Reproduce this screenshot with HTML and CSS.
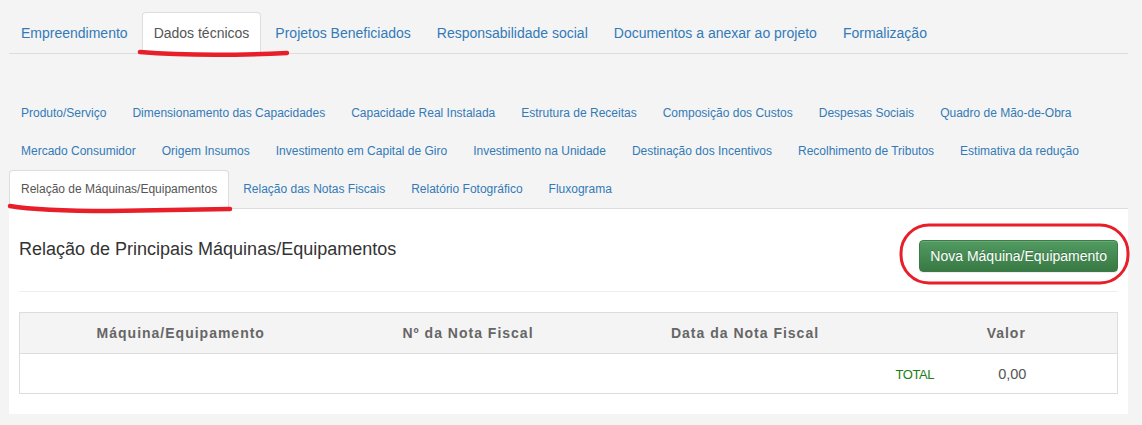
FILE: index.html
```html
<!DOCTYPE html>
<html lang="pt-BR">
<head>
<meta charset="utf-8">
<title>Dados técnicos</title>
<link rel="stylesheet" href="styles.css">
</head>
<body>
<div class="page">
  <ul class="tabs tabs-main">
    <li><a href="#">Empreendimento</a></li>
    <li class="active"><a href="#">Dados técnicos</a></li>
    <li><a href="#">Projetos Beneficiados</a></li>
    <li><a href="#">Responsabilidade social</a></li>
    <li><a href="#">Documentos a anexar ao projeto</a></li>
    <li><a href="#">Formalização</a></li>
  </ul>

  <ul class="tabs tabs-sub">
    <li><a href="#">Produto/Serviço</a></li>
    <li><a href="#">Dimensionamento das Capacidades</a></li>
    <li><a href="#">Capacidade Real Instalada</a></li>
    <li><a href="#">Estrutura de Receitas</a></li>
    <li><a href="#">Composição dos Custos</a></li>
    <li><a href="#">Despesas Sociais</a></li>
    <li><a href="#">Quadro de Mão-de-Obra</a></li>
    <li><a href="#">Mercado Consumidor</a></li>
    <li><a href="#">Origem Insumos</a></li>
    <li><a href="#">Investimento em Capital de Giro</a></li>
    <li><a href="#">Investimento na Unidade</a></li>
    <li><a href="#">Destinação dos Incentivos</a></li>
    <li><a href="#">Recolhimento de Tributos</a></li>
    <li><a href="#">Estimativa da redução</a></li>
    <li class="active"><a href="#">Relação de Máquinas/Equipamentos</a></li>
    <li><a href="#">Relação das Notas Fiscais</a></li>
    <li><a href="#">Relatório Fotográfico</a></li>
    <li><a href="#">Fluxograma</a></li>
  </ul>

  <div class="panel">
    <div class="panel-head">
      <h3 class="panel-title">Relação de Principais Máquinas/Equipamentos</h3>
      <button class="btn-success" type="button">Nova Máquina/Equipamento</button>
    </div>
    <hr class="divider">
    <table class="grid">
      <colgroup>
        <col class="c1"><col class="c2"><col class="c3"><col class="c4">
      </colgroup>
      <thead>
        <tr>
          <th>Máquina/Equipamento</th>
          <th>Nº da Nota Fiscal</th>
          <th>Data da Nota Fiscal</th>
          <th>Valor</th>
        </tr>
      </thead>
      <tbody>
        <tr>
          <td></td>
          <td></td>
          <td></td>
          <td class="total-cell"><span class="total-label">TOTAL</span><span class="total-value">0,00</span></td>
        </tr>
      </tbody>
    </table>
  </div>
</div>

<svg class="marks" width="1142" height="425" viewBox="0 0 1142 425" aria-hidden="true">
  <path d="M140 52 Q 200 57 287 53" />
  <path d="M10 206 Q 40 211 110 211 Q 180 210 230 209" />
  <rect x="901" y="225" width="227" height="58" rx="28" ry="28" class="ring" />
</svg>
</body>
</html>
```
FILE: styles.css
```css
* { box-sizing: border-box; }

html, body {
  margin: 0;
  padding: 0;
  background: #f4f4f4;
  font-family: "Liberation Sans", Arial, sans-serif;
  color: #333;
}

.page {
  padding: 12px 14px 0 9px;
}

.tabs {
  list-style: none;
  margin: 0;
  padding: 0;
  display: flex;
  flex-wrap: wrap;
  border-bottom: 1px solid #ddd;
}

.tabs li {
  margin-bottom: -1px;
}

.tabs a {
  display: block;
  margin-right: 2px;
  border: 1px solid transparent;
  border-radius: 4px 4px 0 0;
  color: #337ab7;
  text-decoration: none;
}

.tabs li.active a {
  background: #fff;
  border-color: #ddd;
  border-bottom-color: transparent;
  color: #555;
}

.tabs-main a {
  font-size: 14px;
  line-height: 20px;
  padding: 10px 11px;
}

.tabs-sub {
  margin-top: 40px;
}

.tabs-sub a {
  font-size: 12px;
  line-height: 17px;
  padding: 10px 11px;
}

.panel {
  background: #fff;
  padding: 30px 10px 20px;
}

.panel-head {
  display: flex;
  justify-content: space-between;
  align-items: flex-start;
}

.panel-title {
  margin: 0;
  font-size: 18px;
  line-height: 20px;
  font-weight: normal;
  color: #333;
}

.btn-success {
  margin-top: 1px;
  font-family: "Liberation Sans", Arial, sans-serif;
  font-size: 14px;
  line-height: 20px;
  padding: 5px 10px;
  color: #fff;
  border: 1px solid #3b7b46;
  border-radius: 4px;
  background: linear-gradient(to bottom, #519b61 0%, #397944 100%);
  text-shadow: 0 -1px 0 rgba(0, 0, 0, 0.2);
  box-shadow: inset 0 1px 0 rgba(255, 255, 255, 0.15), 0 1px 1px rgba(0, 0, 0, 0.075);
}

.divider {
  margin: 19px 0 20px;
  border: 0;
  border-top: 1px solid #eee;
}

.grid {
  width: 100%;
  border-collapse: collapse;
  table-layout: fixed;
  border: 1px solid #ddd;
}

.c1 { width: 322px; }
.c2 { width: 253px; }
.c3 { width: 301px; }

.grid th {
  background: #f4f4f4;
  color: #666;
  font-size: 14px;
  font-weight: bold;
  letter-spacing: 1px;
  height: 41px;
  text-align: center;
  border-bottom: 1px solid #ddd;
  padding: 0 8px;
}

.grid td {
  height: 40px;
  padding: 0 8px;
}

.grid td.total-cell {
  white-space: nowrap;
  padding-left: 0;
}

.total-label {
  display: inline-block;
  font-size: 13px;
  letter-spacing: -0.4px;
  color: #1b7d12;
}

.total-value {
  display: inline-block;
  margin-left: 64px;
  font-size: 14.5px;
  color: #555;
}

.marks {
  position: absolute;
  left: 0;
  top: 0;
  pointer-events: none;
}

.marks path {
  fill: none;
  stroke: #e81e28;
  stroke-width: 4.5;
  stroke-linecap: round;
}

.marks .ring {
  fill: none;
  stroke: #e81e28;
  stroke-width: 3;
}
```
